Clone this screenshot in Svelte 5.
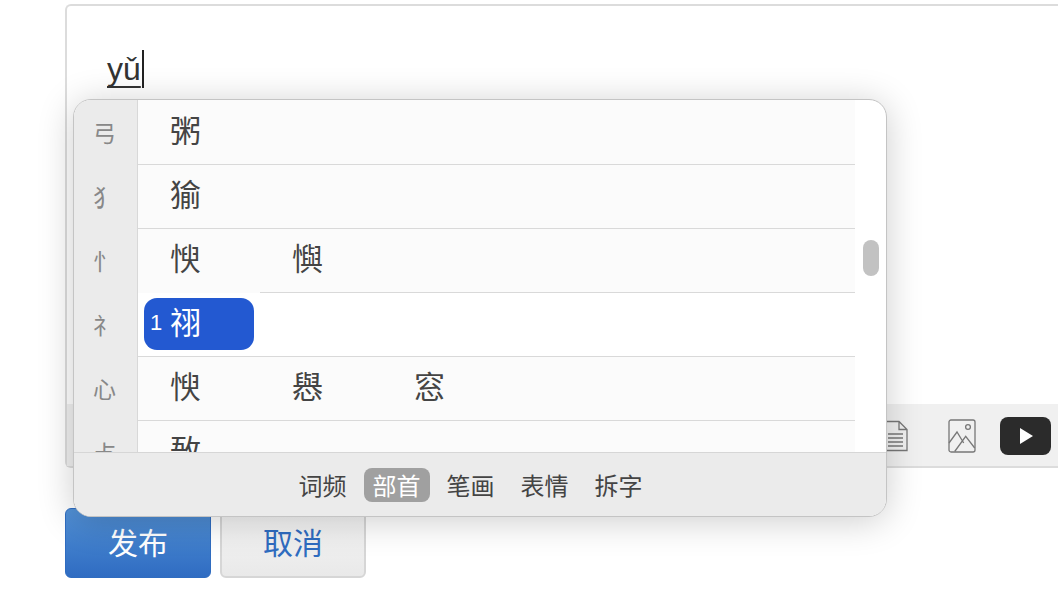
<script>
	const radicals = ['弓', '犭', '忄', '礻', '心', '攴']
	const candidates = [['粥'], ['㺄'], ['㥚', '懙'], ['祤'], ['㥚', '㦛', '窓'], ['敔']]
	const tabs = ['词频', '部首', '笔画', '表情', '拆字']
	const selectedRow = 3
</script>

<div class="page">
	<div class="editor">
		<div class="text-area">
			<span class="composing">yǔ</span><span class="caret"></span>
		</div>
		<div class="toolbar">
			<svg class="doc" width="26" height="32" viewBox="0 0 26 32" fill="none" stroke="#777" stroke-width="1.3">
				<path d="M1 1.5h15l8 8v21H1zM16 1.5v8h8M5 14h15M5 18h15M5 22h15M5 26h15" />
			</svg>
			<svg class="pic" width="28" height="34" viewBox="0 0 28 34" fill="none" stroke="#777" stroke-width="1.3">
				<rect x="1" y="1" width="26" height="32" rx="2" />
				<circle cx="20" cy="8" r="2.4" />
				<path d="M1 24l8-11 6.700 11M6.700 32.500l11-15.200 9 11.700" />
			</svg>
			<div class="video">
				<svg width="16" height="16" viewBox="0 0 16 16"><path d="M2 0l13 8-13 8z" fill="#fff" /></svg>
			</div>
		</div>
	</div>

	<div class="actions">
		<button class="btn primary">发布</button>
		<button class="btn cancel">取消</button>
	</div>

	<div class="ime">
		<div class="ime-body">
			<div class="rail">
				{#each radicals as r}
					<div class="rail-item">{r}</div>
				{/each}
			</div>
			<div class="list">
				{#each candidates as row, i}
					<div class="row" class:selected={i === selectedRow} class:before-selected={i === selectedRow - 1}>
						{#each row as c}
							<div class="cell">
								{#if i === selectedRow}
									<span class="pill"><span class="num">1</span>{c}</span>
								{:else}
									{c}
								{/if}
							</div>
						{/each}
					</div>
				{/each}
			</div>
			<div class="scroll">
				<div class="thumb"></div>
			</div>
		</div>
		<div class="tabs">
			{#each tabs as t, i}
				<span class="tab" class:active={i === 1}>{t}</span>
			{/each}
		</div>
	</div>
</div>

<style>
	:global(body) {
		background: #fff;
		overflow: hidden;
	}
	.page {
		position: relative;
		height: 610px;
		padding: 4px 0 0 65px;
		box-sizing: border-box;
		font-family: "Noto Sans CJK SC", "Liberation Sans", sans-serif;
		overflow: hidden;
	}

	/* editor behind the popup */
	.editor {
		width: 1000px;
		height: 464px;
		box-sizing: border-box;
		border: 2px solid #dcdcdc;
		border-right: none;
		border-radius: 6px 0 0 6px;
		display: flex;
		flex-direction: column;
	}
	.text-area {
		flex: 1;
		padding: 40px 0 0 40px;
		display: flex;
		align-items: flex-start;
	}
	.composing {
		font-family: "Liberation Sans", sans-serif;
		font-size: 32px;
		line-height: 46px;
		color: #333;
		text-decoration: underline;
		text-decoration-thickness: 1.5px;
		text-decoration-skip-ink: none;
		text-underline-offset: 6px;
	}
	.caret {
		width: 2px;
		height: 38px;
		background: #222;
		margin: 4px 0 0 1px;
	}
	.toolbar {
		height: 62px;
		background: #f0f0f0;
		display: flex;
		align-items: center;
		padding: 2px 0 0 816px;
		box-sizing: border-box;
	}
	.pic { margin-left: 39px; }
	.video {
		width: 51px;
		height: 38px;
		margin-left: 24px;
		background: #2b2b2b;
		border-radius: 8px;
		display: flex;
		align-items: center;
		justify-content: center;
	}

	.actions {
		display: flex;
		gap: 9px;
		margin-top: 40px;
	}
	.btn {
		width: 146px;
		height: 70px;
		box-sizing: border-box;
		font-family: inherit;
		font-size: 30px;
		border-radius: 6px;
		padding: 0 0 4px;
	}
	.primary {
		color: #fff;
		border: 1px solid #2f6cc0;
		background: linear-gradient(#5291d6, #2f6cc2);
	}
	.cancel {
		color: #2f6cc0;
		border: 2px solid #d6d6d6;
		background: linear-gradient(#f6f6f6, #e9e9e9);
	}

	/* candidate popup */
	.ime {
		position: absolute;
		left: 73px;
		top: 99px;
		width: 814px;
		height: 418px;
		box-sizing: border-box;
		border-radius: 18px;
		border: 1px solid #c4c4c4;
		background: #fff;
		box-shadow: 0 4px 36px rgba(0, 0, 0, 0.2);
		overflow: hidden;
		display: flex;
		flex-direction: column;
	}
	.ime-body {
		height: 352px;
		display: flex;
		overflow: hidden;
	}
	.rail {
		width: 64px;
		flex-shrink: 0;
		box-sizing: border-box;
		padding-top: 1px;
		background: #ebebeb;
		border-right: 1px solid #d8d8d8;
		color: #888;
	}
	.rail-item {
		height: 64px;
		padding: 0 2px 2px 0;
		box-sizing: border-box;
		display: flex;
		align-items: center;
		justify-content: center;
		font-size: 23px;
	}
	.list {
		width: 717px;
		flex-shrink: 0;
		padding-top: 1px;
		background: #fbfbfb;
	}
	.row {
		position: relative;
		height: 64px;
		box-sizing: border-box;
		display: flex;
		background: #fbfbfb;
		border-bottom: 1px solid #d9d9d9;
		color: #444;
		font-size: 31px;
	}
	.row.selected {
		background: #fff;
	}
	.row.before-selected {
		border-bottom: none;
	}
	.row.before-selected::after {
		content: '';
		position: absolute;
		left: 122px;
		right: 0;
		bottom: 0;
		height: 1px;
		background: #d9d9d9;
	}
	.cell {
		width: 122px;
		padding: 0 0 0 32px;
		box-sizing: border-box;
		line-height: 56px;
		position: relative;
	}
	.pill {
		position: absolute;
		left: 6px;
		top: 5px;
		width: 110px;
		height: 52px;
		box-sizing: border-box;
		padding-left: 26px;
		line-height: 46px;
		background: #2359d1;
		border-radius: 13px;
		color: #fff;
	}
	.num {
		position: absolute;
		left: 6px;
		top: 2px;
		font-family: "Liberation Sans", sans-serif;
		font-size: 22px;
	}
	.scroll {
		flex: 1;
		position: relative;
	}
	.thumb {
		position: absolute;
		left: 8px;
		top: 140px;
		width: 16px;
		height: 36px;
		border-radius: 8px;
		background: #c2c2c2;
	}
	.tabs {
		flex: 1;
		background: #ebebeb;
		border-top: 1px solid #d6d6d6;
		display: flex;
		align-items: center;
		justify-content: center;
		gap: 8px;
		padding: 0 19px 0 0;
		font-size: 24px;
		color: #444;
	}
	.tab {
		padding: 0 9px 1px;
		line-height: 33px;
		border-radius: 8px;
	}
	.tab.active {
		background: #a0a0a0;
		color: #fff;
	}
</style>
